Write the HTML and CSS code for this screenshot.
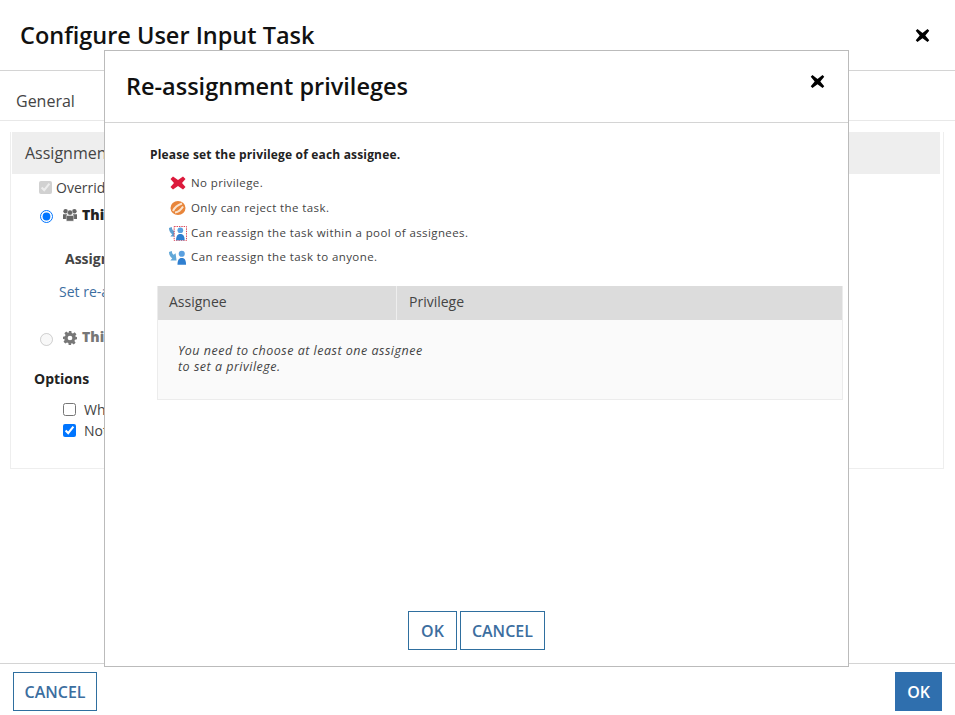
FILE: index.html
```html
<!DOCTYPE html>
<html lang="en">
<head>
  <meta charset="UTF-8">
  <title>Configure User Input Task</title>
  <link rel="stylesheet" href="styles.css">
</head>
<body>
  <div class="dialog">
    <div class="dialog-header">
      <h1>Configure User Input Task</h1>
      <svg class="close-icon" viewBox="0 0 16 16"><path d="M2.600 1 8 5.200 13.400 1 15.200 3 11 8l4.200 5-1.800 2L8 10.800 2.600 15 .8 13 5 8 .8 3z"/></svg>
    </div>
    <div class="tabs"><span>General</span></div>
    <div class="panel-wrap">
      <div class="panel">
        <div class="panel-title">Assignment</div>
        <div class="panel-body">
          <label class="row override"><input type="checkbox" checked disabled> Override</label>
          <div class="row this-row">
            <input type="radio" name="who" checked>
            <svg class="group-icon" viewBox="0 0 16 14"><circle cx="3" cy="2.800" r="2.600"/><circle cx="13" cy="2.800" r="2.600"/><path d="M0 6h4.500v5.500H0zM11.500 6H16v5.500h-4.500z"/><circle cx="8" cy="4.200" r="3" stroke="#fff" stroke-width=".5"/><path d="M3.800 7.600h8.400V14H3.800z" stroke="#fff" stroke-width=".5"/></svg>
            <b>This</b>
          </div>
          <div class="assign-label">Assignee</div>
          <a class="set-link">Set re-assignment</a>
          <div class="row this-row second">
            <input type="radio" name="who" disabled>
            <svg class="gear-icon" viewBox="0 0 16 16"><path d="M6.500 0h3l.4 2.200 1.500.6L13.300 1.500l2.100 2.100-1.300 1.900.6 1.500L16 6.500v3l-2.300.4-.6 1.500 1.300 1.900-2.100 2.100-1.900-1.300-1.500.6L9.500 16h-3l-.4-2.300-1.500-.6-1.900 1.300-2.100-2.100 1.300-1.900-.6-1.500L0 9.500v-3l2.300-.4.600-1.500L1.600 2.700 3.700.6l1.900 1.300 1.500-.6zM8 5.300a2.700 2.700 0 1 0 0 5.400 2.700 2.700 0 0 0 0-5.400z" fill-rule="evenodd"/></svg>
            <b>This</b>
          </div>
          <div class="options-title">Options</div>
          <label class="row option"><input type="checkbox"> When</label>
          <label class="row option"><input type="checkbox" checked> Notify</label>
        </div>
      </div>
    </div>
    <div class="dialog-footer">
      <button class="btn cancel-main">CANCEL</button>
      <button class="btn primary">OK</button>
    </div>
  </div>

  <!-- Re-assignment modal -->
  <div class="modal">
    <div class="modal-header">
      <h2>Re-assignment privileges</h2>
      <svg class="close-icon" viewBox="0 0 16 16"><path d="M2.600 1 8 5.200 13.400 1 15.200 3 11 8l4.200 5-1.800 2L8 10.800 2.600 15 .8 13 5 8 .8 3z"/></svg>
    </div>
    <div class="modal-body">
      <p class="intro">Please set the privilege of each assignee.</p>
      <ul class="legend">
        <li>
          <svg class="legend-icon" viewBox="0 0 18 18"><path d="M4 2.500 9 6l5-3.500L16.500 5 13 9l3.500 4-2.500 2.500L9 12l-5 3.500L1.500 13 5 9 1.500 5z" fill="#dc1a3c"/></svg>
          No privilege.
        </li>
        <li>
          <svg class="legend-icon" viewBox="0 0 18 18"><ellipse cx="9" cy="9" rx="7.500" ry="7" fill="#e8853a"/><path d="M4 12c1.500-3.500 4.500-6 9-7.500M6 13.500c3-.5 6-2.500 8-6" stroke="#fbe3cc" stroke-width="2" fill="none"/></svg>
          Only can reject the task.
        </li>
        <li>
          <svg class="legend-icon wide" viewBox="0 0 20 16"><path d="M1 2 4 1c0 2 1 3.500 2 4l2-1.500L9 11H2.500l2-2.200C2.500 7.500 1 5 1 2z" fill="#5b9fd2"/><rect x="6.500" y=".5" width="13" height="15" fill="#fff" stroke="#d8384c" stroke-dasharray="1.500 1"/><circle cx="13" cy="4.500" r="3" fill="#5aa0e0"/><path d="M8.500 15c0-5 2-6.500 4.500-6.500s4.500 1.500 4.500 6.500z" fill="#2f7fd0"/></svg>
          Can reassign the task within a pool of assignees.
        </li>
        <li>
          <svg class="legend-icon wide" viewBox="0 0 20 16"><path d="M1 2 4 1c0 2 1 3.500 2 4l2-1.500L9 11H2.500l2-2.200C2.500 7.500 1 5 1 2z" fill="#62a8d8"/><circle cx="14.500" cy="4" r="3.200" fill="#5aa0e0"/><path d="M10 15.500c0-5.500 2-7 4.500-7s4.500 1.500 4.500 7z" fill="#2f7fd0"/></svg>
          Can reassign the task to anyone.
        </li>
      </ul>
      <div class="priv-table">
        <div class="priv-head">
          <div class="col-assignee">Assignee</div>
          <div class="col-privilege">Privilege</div>
        </div>
        <div class="priv-empty">You need to choose at least one assignee<br>to set a privilege.</div>
      </div>
    </div>
    <div class="modal-footer">
      <button class="btn ok-small">OK</button>
      <button class="btn">CANCEL</button>
    </div>
  </div>
</body>
</html>
```

FILE: styles.css
```css
* {
  margin: 0;
  padding: 0;
  box-sizing: border-box;
}

html, body {
  height: 100%;
  overflow: hidden;
}

body {
  font-family: 'Open Sans', sans-serif;
  background-color: #fff;
  color: #333;
}

.dialog {
  height: 715px;
  display: flex;
  flex-direction: column;
}

.dialog-header {
  height: 71px;
  padding: 0 25px 0 20px;
  display: flex;
  justify-content: space-between;
  align-items: center;
  border-bottom: 1px solid #d4d4d4;
}

.dialog-header h1 {
  font-size: 23.500px;
  font-weight: 600;
  color: #111;
}

.close-icon {
  width: 15px;
  height: 15px;
  fill: #000;
}

.modal-header .close-icon {
  margin-bottom: 9px;
}

.tabs {
  height: 50px;
  padding: 19px 16px 0;
  font-size: 16px;
  color: #444;
  border-bottom: 1px solid #e8e8e8;
}

.panel-wrap {
  flex: 1;
  padding: 11px 11px 0 10px;
}

.panel {
  height: 337px;
  border: 1px solid #eee;
  border-top: none;
  padding-right: 3px;
  padding-left: 1px;
}

.panel-title {
  height: 42px;
  padding: 8px 13px;
  font-size: 16px;
  line-height: 26px;
  background-color: #eee;
  color: #444;
}

.panel-body {
  padding: 3px 0 0 27px;
  font-size: 14px;
}

.row {
  display: flex;
  align-items: center;
}

.override {
  height: 20px;
  gap: 4px;
  color: #444;
}

.override input {
  width: 13px;
  height: 13px;
}

.this-row {
  margin-top: 7px;
  height: 20px;
  font-weight: 700;
  color: #222;
}

.this-row input {
  width: 13px;
  height: 13px;
  margin: 5px 10px 0 1px;
}

.this-row svg {
  width: 14px;
  height: 14px;
  margin: 2px 5px 0 0;
  fill: #666;
}

.this-row.second {
  margin-top: 0;
  color: #777;
}

.this-row.second input {
  margin-top: 7px;
}

.this-row.second svg {
  fill: #777;
  margin-top: 3px;
}

.assign-label {
  margin: 25px 0 0 26px;
  font-weight: 700;
  line-height: 20px;
  color: #444;
}

.set-link {
  display: block;
  margin: 13px 0 24px 20px;
  line-height: 20px;
  color: #3c6e9f;
}

.options-title {
  margin: 23px 0 0 -5px;
  font-weight: 700;
  line-height: 20px;
  color: #222;
}

.options-title + .option {
  margin-top: 10px;
}

.option {
  height: 21px;
  margin-left: 24px;
  gap: 8px;
  color: #444;
}

.option input {
  width: 13px;
  height: 13px;
}

.dialog-footer {
  height: 52px;
  padding: 8px 13px 4px;
  display: flex;
  justify-content: space-between;
  border-top: 1px solid #d4d4d4;
}

.btn {
  height: 39px;
  padding: 0 11px;
  font-family: 'Open Sans', sans-serif;
  font-size: 16px;
  font-weight: 600;
  background-color: #fff;
  color: #3c6e9f;
  border: 1px solid #2f6f9f;
}

.btn.cancel-main {
  padding: 0 10.500px;
}

.btn.ok-small {
  padding: 0 12px;
}

.btn.primary {
  padding: 0 11px;
  background-color: #2f6fae;
  color: #fff;
  border-color: #2f6fae;
}

/* Modal */
.modal {
  position: absolute;
  top: 50px;
  left: 104px;
  width: 745px;
  height: 617px;
  display: flex;
  flex-direction: column;
  background-color: #fff;
  border: 1px solid #bbb;
}

.modal-header {
  height: 72px;
  flex: none;
  padding: 0 23px 2px 21px;
  display: flex;
  justify-content: space-between;
  align-items: center;
  border-bottom: 1px solid #d4d4d4;
}

.modal-header h2 {
  font-size: 23.500px;
  font-weight: 600;
  color: #111;
}

.modal-body {
  flex: 1;
  padding: 23px 5px 0 45px;
}

.intro {
  font-size: 12px;
  font-weight: 700;
  line-height: 18px;
  letter-spacing: .17px;
  color: #222;
}

.legend {
  list-style: none;
  margin: 6px 0 0 19px;
}

.legend li {
  height: 25px;
  display: flex;
  align-items: center;
  gap: 4px;
  font-size: 11.500px;
  letter-spacing: .4px;
  color: #444;
}

.legend li:last-child {
  height: 24px;
  padding-bottom: 1px;
}

.legend-icon {
  width: 18px;
  height: 18px;
  flex: none;
}

.legend-icon.wide {
  width: 19px;
  height: 15.200px;
  margin-left: -1px;
  margin-top: 2px;
}

.priv-table {
  margin: 17px 0 0 7px;
  border: 1px solid #ececec;
  border-top: none;
}

.priv-head {
  height: 34px;
  display: flex;
  background-color: #dcdcdc;
  font-size: 14px;
  line-height: 31px;
  color: #444;
}

.col-assignee {
  width: 239px;
  padding-left: 11px;
  border-right: 1px solid #eee;
}

.col-privilege {
  padding-left: 12px;
}

.priv-empty {
  height: 79px;
  padding: 23px 20px;
  font-size: 12.500px;
  line-height: 16px;
  font-style: italic;
  letter-spacing: .5px;
  color: #444;
  background-color: #fafafa;
}

.modal-footer {
  height: 55px;
  flex: none;
  display: flex;
  justify-content: center;
  gap: 3px;
}
```
